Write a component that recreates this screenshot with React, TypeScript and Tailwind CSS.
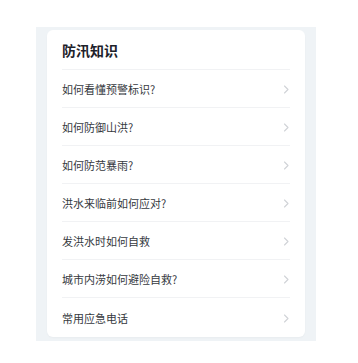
const items = [
  '如何看懂预警标识?',
  '如何防御山洪?',
  '如何防范暴雨?',
  '洪水来临前如何应对?',
  '发洪水时如何自救',
  '城市内涝如何避险自救?',
  '常用应急电话',
];

const Chevron = () => (
  <svg width="7" height="9" viewBox="0 0 7 9" fill="none">
    <path d="M1.5 1 L5 4.5 L1.5 8" stroke="#d0d3d7" strokeWidth="1.1" strokeLinecap="round" strokeLinejoin="round" />
  </svg>
);

export default function App() {
  return (
    <div className="min-h-screen bg-white pt-[27px] font-['Noto_Sans_CJK_SC','Noto_Sans',sans-serif]">
      <div className="ml-[36px] w-[280px] bg-[#eff3f6] px-[11px] pt-[3px] pb-[4px]">
        <div className="rounded-md bg-white px-[15px] shadow-[0_1px_2px_rgba(0,0,0,0.03)]">
          <div className="flex h-[40px] items-center border-b border-[#f1f2f4] pt-[1px]">
            <h2 className="text-[14px] font-bold text-[#1d2129]">防汛知识</h2>
          </div>
          {items.map((t, i) => (
            <div
              key={t}
              className={`flex items-center justify-between pt-[1px] ${
                i === items.length - 1 ? 'h-[39px]' : 'h-[38px] border-b border-[#f1f2f4]'
              }`}
            >
              <span className="text-[11px] text-[#36393e]">{t}</span>
              <Chevron />
            </div>
          ))}
        </div>
      </div>
    </div>
  );
}
